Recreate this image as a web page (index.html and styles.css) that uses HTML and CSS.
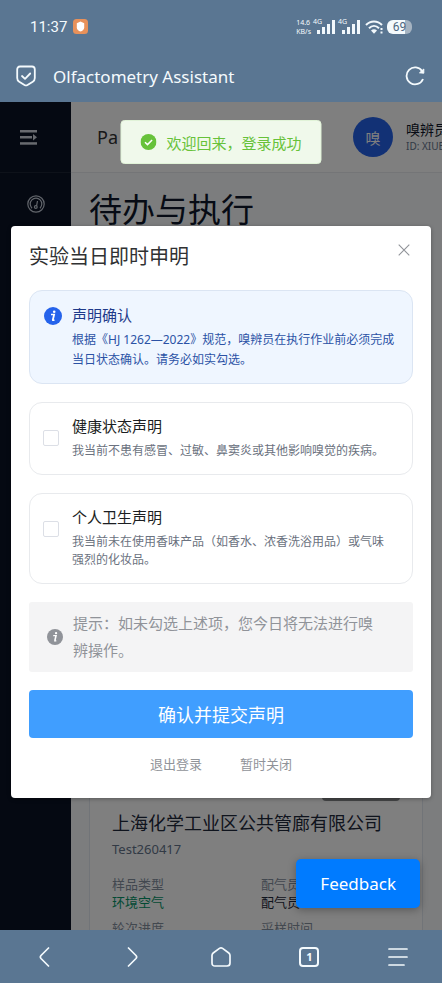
FILE: index.html
```html
<!DOCTYPE html>
<html lang="zh-CN">
<head>
<meta charset="utf-8">
<meta name="viewport" content="width=device-width, initial-scale=1">
<title>Olfactometry Assistant</title>
<link rel="stylesheet" href="styles.css">
</head>
<body>
<header class="browser-top">
  <div class="status">
    <span class="clock">11:37</span>
    <svg class="app-badge" width="15" height="15" viewBox="0 0 15 15"><rect width="15" height="15" rx="3.5" fill="#e8915a"/><path d="M7.500 2.600 11.200 4.300V8.500C11.200 10.500 9.500 12 7.500 12.600 5.500 12 3.800 10.500 3.800 8.500V4.300Z" fill="#fff"/></svg>
    <span class="speed"><span>14.6</span><span>KB/s</span></span>
    <span class="signal"><span class="net">4G</span>
      <svg width="18" height="14" viewBox="0 0 18 14" fill="#f2f8fc"><rect x="0" y="10" width="3" height="4"/><rect x="5" y="7" width="3" height="7"/><rect x="10" y="4" width="3" height="10"/><rect x="15" y="0" width="3" height="14"/></svg></span>
    <span class="signal"><span class="net">4G</span>
      <svg width="18" height="14" viewBox="0 0 18 14" fill="#f2f8fc"><rect x="0" y="10" width="3" height="4"/><rect x="5" y="7" width="3" height="7"/><rect x="10" y="4" width="3" height="10"/><rect x="15" y="0" width="3" height="14"/></svg></span>
    <svg class="wifi" width="19" height="14" viewBox="0 0 19 14" fill="none" stroke="#f2f8fc" stroke-width="2"><path d="M1 5C5.500.2 12.500.2 17 5"/><path d="M4 8.300C7 5.300 11 5.300 14 8.300"/><path d="M6 10.500Q9 8.200 12 10.500L9 13.800Z" fill="#f2f8fc" stroke="none"/><path d="M16.500 8v2M16.500 11.500v2" stroke-width="2"/></svg>
    <span class="battery">69</span>
  </div>
  <div class="titlebar">
    <svg width="20" height="22" viewBox="0 0 20 22" fill="none" stroke="#f4fafd" stroke-width="1.800" stroke-linejoin="round" stroke-linecap="round"><path d="M4 1.500H16Q18.800 1.500 18.800 4.500V13Q18.800 15.500 16.800 16.700L11.500 20Q10 20.800 8.500 20L3.200 16.700Q1.200 15.500 1.200 13V4.500Q1.200 1.500 4 1.500Z"/><path d="M6 11 9 13.800 14.200 8.500"/></svg>
    <h1>Olfactometry Assistant</h1>
    <button class="icon-btn" aria-label="Reload"><svg width="20" height="20" viewBox="0 0 20 20" fill="none" stroke="#f4fafd" stroke-width="1.800"><path d="M17.200 5.200A8.500 8.500 0 1 0 18 13"/><path d="M14.500 6.800 18.800 3V7.200Z" fill="#f4fafd" stroke-width="1"/></svg></button>
  </div>
</header>

<div class="page">
  <aside class="sidebar">
    <div class="fold"><svg width="17" height="15" viewBox="0 0 17 15" fill="#d0d5de"><rect width="17" height="2.500"/><rect y="6" width="12" height="2.500"/><rect y="12.200" width="17" height="2.500"/><path d="M13 4 17 7.300 13 10.500Z"/></svg></div>
    <div class="side-item"><svg width="18" height="18" viewBox="0 0 18 18" fill="none" stroke="#c3cad6" stroke-width="1.200"><circle cx="9" cy="9" r="8.200"/><path d="M5 13.200A5.800 5.800 0 1 1 13 13.200"/><circle cx="8.800" cy="12" r="1.400"/><path d="M9.500 11 10.500 6"/></svg></div>
  </aside>
  <main class="main">
    <div class="topbar">
      <span class="crumb">Pa</span>
      <span class="avatar">嗅</span>
      <div class="user"><div class="user-name">嗅辨员</div><div class="user-id">ID: XIUE</div></div>
    </div>
    <h2>待办与执行</h2>
    <article class="task">
      <span class="tag"></span>
      <h3>上海化学工业区公共管廊有限公司</h3>
      <p class="code">Test260417</p>
      <dl>
        <div><dt>样品类型</dt><dd class="green">环境空气</dd></div>
        <div><dt>配气员</dt><dd>配气员</dd></div>
        <div><dt>轮次进度</dt></div>
        <div><dt>采样时间</dt></div>
      </dl>
    </article>
  </main>

  <div class="overlay">
    <section class="dialog" role="dialog" aria-labelledby="dialog-title">
      <div class="dialog-head">
        <h2 id="dialog-title">实验当日即时申明</h2>
        <button class="icon-btn" aria-label="Close"><svg width="12" height="12" viewBox="0 0 12 12" stroke="#909399" stroke-width="1.100"><path d="M.7.700 11.300 11.300M11.300.700.700 11.300"/></svg></button>
      </div>
      <div class="notice">
        <svg class="notice-icon" width="18" height="18" viewBox="0 0 18 18"><circle cx="9" cy="9" r="9" fill="#2563eb"/><circle cx="10.200" cy="4.700" r="1.300" fill="#fff"/><path d="M7 7.500H10.300L8.900 13.300H10.500M10 7.500 8.600 13.300" fill="none" stroke="#fff" stroke-width="1.500"/></svg>
        <div>
          <h3>声明确认</h3>
          <p>根据《HJ 1262—2022》规范，嗅辨员在执行作业前必须完成当日状态确认。请务必如实勾选。</p>
        </div>
      </div>
      <label class="option">
        <input type="checkbox">
        <span><span class="option-title">健康状态声明</span><span class="option-text">我当前不患有感冒、过敏、鼻窦炎或其他影响嗅觉的疾病。</span></span>
      </label>
      <label class="option">
        <input type="checkbox">
        <span><span class="option-title">个人卫生声明</span><span class="option-text">我当前未在使用香味产品（如香水、浓香洗浴用品）或气味强烈的化妆品。</span></span>
      </label>
      <div class="hint">
        <svg width="16" height="16" viewBox="0 0 18 18"><circle cx="9" cy="9" r="9" fill="#909399"/><circle cx="10.200" cy="4.700" r="1.300" fill="#fff"/><path d="M7 7.500H10.300L8.900 13.300H10.500M10 7.500 8.600 13.300" fill="none" stroke="#fff" stroke-width="1.500"/></svg>
        <p>提示：如未勾选上述项，您今日将无法进行嗅辨操作。</p>
      </div>
      <button class="submit">确认并提交声明</button>
      <div class="links"><button>退出登录</button><button>暂时关闭</button></div>
    </section>
  </div>

  <div class="toast" role="status">
    <svg width="16" height="16" viewBox="0 0 16 16"><circle cx="8" cy="8" r="8" fill="#67c23a"/><path d="M4.500 8.200 7 10.600 11.600 5.900" fill="none" stroke="#fff" stroke-width="1.500"/></svg>
    <span>欢迎回来，登录成功</span>
  </div>
  <button class="feedback">Feedback</button>
</div>

<nav class="browser-bottom">
  <button class="icon-btn" aria-label="Back"><svg width="20" height="20" viewBox="0 0 20 20"><path d="M14.500 1 7 8.500Q5.700 10 7 11.500L14.500 19"/></svg></button>
  <button class="icon-btn" aria-label="Forward"><svg width="20" height="20" viewBox="0 0 20 20"><path d="M5.500 1 13 8.500Q14.300 10 13 11.500L5.500 19"/></svg></button>
  <button class="icon-btn" aria-label="Home"><svg width="20" height="20" viewBox="0 0 20 20"><path d="M8.400 1.400Q10 .4 11.600 1.400L17.800 6Q19 7 19 8.500V16Q19 19 16 19H4Q1 19 1 16V8.500Q1 7 2.200 6Z"/></svg></button>
  <button class="icon-btn tabs" aria-label="Tabs">1</button>
  <button class="icon-btn" aria-label="Menu"><svg width="20" height="20" viewBox="0 0 20 20"><path d="M1 2H19M1 10H19M1 18H16"/></svg></button>
</nav>
</body>
</html>
```
FILE: styles.css
```css
* { box-sizing: border-box; }
body, h1, h2, h3, p, dl, dd { margin: 0; }
body {
  height: 100vh;
  display: flex;
  flex-direction: column;
  overflow: hidden;
  font-family: "Noto Sans", "Noto Sans CJK SC", sans-serif;
  color: #303133;
}
h1, h2, h3 { font-weight: 400; }
button { font: inherit; border: 0; padding: 0; background: none; cursor: pointer; }
svg { display: block; flex: none; }
.icon-btn { display: grid; place-items: center; flex: none; }

/* Browser chrome */
.browser-top { background: #5a7692; color: #f4fafd; flex: none; padding: 16px 17px 0 16px; height: 102px; }
.status { display: flex; align-items: center; height: 21px; padding: 0 13px 0 14px; }
.clock { font-family: Roboto, sans-serif; font-size: 15px; }
.app-badge { margin-left: 6px; margin-right: auto; }
.speed { display: flex; flex-direction: column; font-size: 7px; line-height: 9px; margin-right: 2px; }
.signal { display: flex; align-items: center; position: relative; padding-left: 4px; margin-right: 3px; }
.net { position: absolute; left: 0; top: -3px; font-size: 7px; line-height: 9px; }
.wifi { margin-left: 2px; margin-right: 3px; }
.battery {
  width: 25px; height: 14px; border-radius: 6px;
  background: linear-gradient(90deg, #f4fafd 72%, #a5b3c1 72%);
  color: #4c6781; font: 12px/14px Roboto, sans-serif; text-align: center;
}
.titlebar { display: flex; align-items: center; height: 36px; margin-top: 21px; gap: 17px; }
.titlebar h1 { flex: 1; font-size: 17px; }
.browser-bottom { background: #5a7692; flex: none; height: 53px; display: grid; grid-template-columns: repeat(5, 1fr); align-items: center; }
.browser-bottom path { fill: none; stroke: #f4fafd; stroke-width: 1.7; stroke-linecap: round; }
.tabs { width: 20px; height: 20px; border: 2px solid #f4fafd; border-radius: 4px; color: #f4fafd; font: 700 11px/14px "Noto Sans", sans-serif; justify-self: center; }

/* Application page */
.page { flex: 1; min-height: 0; position: relative; display: flex; overflow: hidden; background: #f8fafc; }
.sidebar { width: 71px; flex: none; background: #0a1224; }
.fold { height: 71px; display: flex; align-items: center; padding-left: 20px; border-bottom: 1px solid #1d2535; }
.side-item { height: 62px; display: grid; place-items: center; }
.main { flex: 1; min-width: 0; display: flex; flex-direction: column; }
.topbar { height: 71px; flex: none; background: #fff; border-bottom: 1px solid #e8ebef; display: flex; align-items: center; padding-left: 26px; overflow: hidden; white-space: nowrap; }
.crumb { font-size: 18px; margin-right: auto; }
.avatar { width: 40px; height: 40px; border-radius: 50%; background: #2563eb; color: #fff; font-size: 15px; display: grid; place-items: center; flex: none; }
.user { width: 49px; padding-left: 13px; flex: none; color: #0f172a; font-size: 14px; line-height: 18px; }
.user-id { font-size: 10px; line-height: 14px; color: #64748b; }
.main > h2 { font-size: 33px; line-height: 40px; margin: 17px 18px 12px; color: #0f172a; }
.task { flex: 1; min-height: 0; margin: 0 19px 0 18px; padding: 0 22px; background: #fff; border: solid #e2e8f0; border-width: 1px 1px 0; display: flex; flex-direction: column; justify-content: flex-end; color: #1e293b; }
.tag { width: 78px; height: 24px; border-radius: 4px; background: #888a8c; align-self: flex-end; margin-bottom: 10px; }
.task h3 { font-size: 18px; line-height: 24px; white-space: nowrap; }
.code { font-size: 13px; line-height: 18px; margin-top: 5px; color: #64748b; }
.task dl { display: grid; grid-template-columns: 1fr 1fr; gap: 8px 10px; margin-top: 17px; margin-bottom: -7px; font-size: 13px; line-height: 18px; }
dt { color: #85909f; }
.green { color: #059669; }

/* Declaration dialog */
.overlay { position: absolute; inset: 0; background: rgba(0, 0, 0, .5); padding: 124px 11px 0; }
.dialog { background: #fff; border-radius: 4px; padding: 18px 18px 24px; box-shadow: 0 1px 4px rgba(0, 0, 0, .3); }
.dialog-head { display: flex; justify-content: space-between; align-items: flex-start; height: 46px; }
.dialog-head h2 { font-size: 20px; line-height: 26px; }
.dialog-head .icon-btn { width: 18px; height: 12px; }
.notice, .option { display: flex; border: 1px solid #e8eaed; border-radius: 13px; margin-bottom: 18px; }
.notice { background: #eff6ff; border-color: #dbe5f3; padding: 13px 14px; gap: 10px; color: #1e3a8a; }
.notice-icon { margin-top: 3px; }
.notice h3 { font-size: 15px; line-height: 22px; margin-bottom: 4px; }
.notice p { font-size: 12px; line-height: 20px; color: #2b52a5; }
.option { padding: 13px 20px 14px 13px; gap: 13px; }
.option input { appearance: none; width: 16px; height: 16px; flex: none; margin: 14px 0 0; border: 1px solid #dcdfe6; border-radius: 2px; background: #fff; }
.option-title, .option-text { display: block; }
.option-title { font-size: 15px; line-height: 20px; color: #1b1e22; margin-bottom: 6px; }
.option-text { font-size: 12px; line-height: 18px; color: #6b7280; }
.hint { display: flex; align-items: center; gap: 10px; padding: 8px 30px 8px 18px; background: #f4f4f5; border-radius: 3px; color: #909399; font-size: 15px; line-height: 27px; margin-bottom: 18px; }
.submit { display: block; width: 100%; height: 48px; border-radius: 4px; background: #409eff; color: #fff; font-size: 18px; }
.links { display: flex; justify-content: center; gap: 38px; margin-top: 16px; }
.links button { color: #909399; font-size: 13px; line-height: 20px; }

.toast { position: absolute; top: 18px; left: 50%; transform: translateX(-50%); display: flex; align-items: center; gap: 10px; height: 44px; padding: 0 19px; background: #f0f9eb; border: 1px solid #e1f3d8; border-radius: 4px; color: #67c23a; font-size: 15px; white-space: nowrap; }
.feedback { position: absolute; right: 22px; bottom: 22px; height: 49px; padding: 0 24px; border-radius: 5px; background: #007bff; color: #fff; font-size: 17px; box-shadow: 0 2px 8px rgba(0, 0, 0, .3); }
```
